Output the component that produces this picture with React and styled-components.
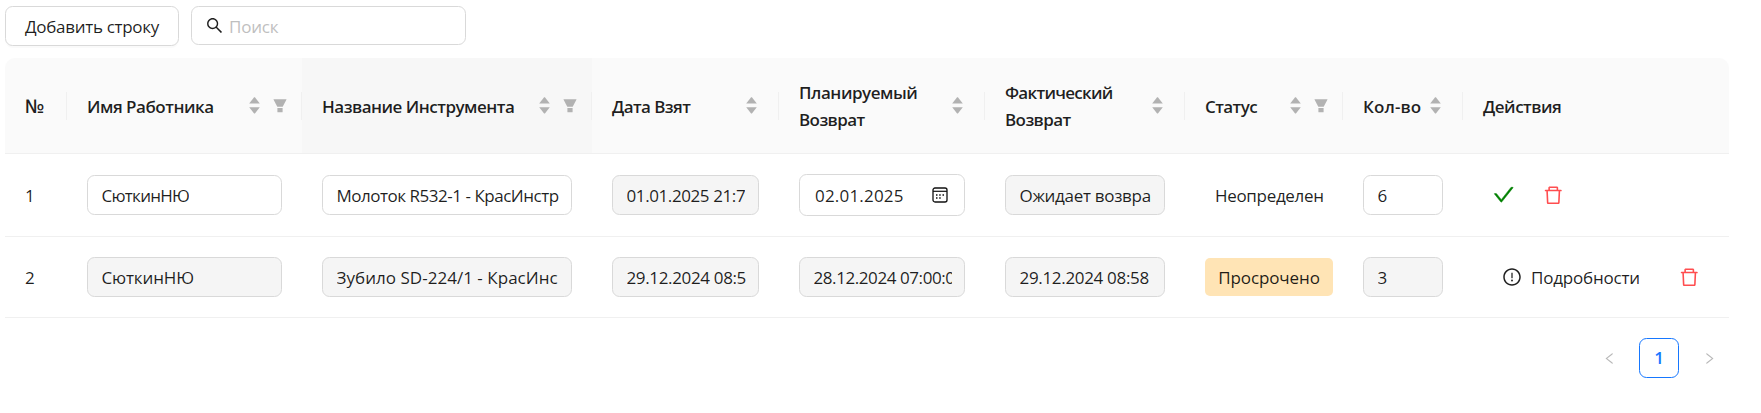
import React from 'react';
import styled, { createGlobalStyle, css } from 'styled-components';
import {
  AiOutlineCheck,
  AiOutlineDelete,
  AiOutlineExclamationCircle,
  AiOutlineLeft,
  AiOutlineRight,
  AiOutlineSearch,
} from 'react-icons/ai';

const GlobalStyle = createGlobalStyle`
  *, *::before, *::after { box-sizing: border-box; }
  body {
    margin: 0;
    background: #fff;
    color: rgba(0, 0, 0, 0.88);
    font-family: 'Open Sans', 'Noto Sans', sans-serif;
    font-size: 17px;
    line-height: 27.5px;
  }
`;

const Page = styled.main`
  width: 1729px;
  padding: 6px 0 0 5px;
`;

const Toolbar = styled.div`
  display: flex;
  align-items: flex-start;
  gap: 12px;
  height: 52px;
`;

const AddButton = styled.button`
  width: 174px;
  height: 40px;
  padding: 1px 0 0;
  border: 1px solid #d9d9d9;
  border-radius: 7.5px;
  background: #fff;
  box-shadow: 0 2px 0 rgba(0, 0, 0, 0.02);
  color: inherit;
  font: inherit;
  letter-spacing: -0.3px;
`;

const SearchBox = styled.div`
  display: flex;
  align-items: center;
  gap: 5px;
  width: 275px;
  height: 39px;
  padding: 0 14px 0 13px;
  border: 1px solid #d9d9d9;
  border-radius: 7.5px;

  svg { margin-top: -1px; }
`;

const Placeholder = styled.span`
  padding-top: 2px;
  color: #bfbfbf;
  letter-spacing: -0.2px;
`;

const Table = styled.div`
  width: 100%;
`;

const columnTracks = css`
  display: grid;
  grid-template-columns: 62px 235px 290px 187px 206px 200px 158px 120px 1fr;
`;

const HeadRow = styled.div`
  ${columnTracks}
  height: 96px;
  border-bottom: 1px solid #f0f0f0;
  border-radius: 10px 10px 0 0;
  background: #fafafa;
  overflow: hidden;
`;

const HeadCell = styled.div`
  display: flex;
  align-items: center;
  padding-left: 20px;
  background: ${(p) => (p.$hovered ? '#f7f7f7' : 'transparent')};
  font-weight: 600;
`;

const HeadTitle = styled.span`
  flex: 1;
  padding-top: ${(p) => (p.$double ? 0 : 2)}px;
  line-height: 27px;
`;

const TitleLine = styled.span`
  display: block;
  white-space: nowrap;
  font-size: ${(p) => p.$size || 17}px;
  letter-spacing: ${(p) => p.$track || 0}px;
`;

const HeadIcons = styled.span`
  display: flex;
  align-items: center;
  gap: 13px;
  margin-right: ${(p) => (p.$filter ? 14.5 : 21)}px;
`;

const Divider = styled.span`
  width: 1px;
  height: 28px;
  background: #f0f0f0;
`;

const Row = styled.div`
  ${columnTracks}
  height: ${(p) => p.$height}px;
  border-bottom: 1px solid #f0f0f0;
`;

const Cell = styled.div`
  display: flex;
  align-items: center;
  padding: 0 20px;
`;

const RowNumber = styled.span`
  padding-top: 1px;
`;

const Field = styled.div`
  display: flex;
  align-items: center;
  width: 100%;
  height: 40px;
  padding: 0 12.5px 0 13.5px;
  border: 1px solid #d9d9d9;
  border-radius: 7.5px;
  background: ${(p) => (p.$disabled ? '#f5f5f5' : '#fff')};
`;

const DateField = styled(Field)`
  justify-content: space-between;
  height: 42px;
  padding: 0 16.5px 0 15px;
`;

const FieldText = styled.span`
  min-width: 0;
  padding-top: 1px;
  overflow: hidden;
  white-space: nowrap;
  letter-spacing: ${(p) => p.$track || 0}px;
`;

const Status = styled.span`
  flex: none;
  padding: 6px 10px 5px;
  letter-spacing: -0.32px;
  white-space: nowrap;
`;

const LateStatus = styled(Status)`
  width: 128px;
  padding: 6px 0 4.5px;
  border-radius: 5px;
  background: #ffe4b5;
  letter-spacing: -0.1px;
  text-align: center;
`;

const Actions = styled.div`
  display: flex;
  align-items: center;
  gap: ${(p) => p.$gap}px;
  padding-left: ${(p) => p.$inset}px;
`;

const IconButton = styled.button`
  display: flex;
  padding: 0;
  border: 0;
  background: none;
  color: ${(p) => p.$color};

  svg { stroke-width: ${(p) => p.$stroke || 0}px; }
`;

const DetailsButton = styled.button`
  display: flex;
  align-items: center;
  gap: 9px;
  padding: 1px 0 0;
  border: 0;
  background: none;
  color: inherit;
  font: inherit;
  letter-spacing: -0.2px;

  svg { margin-top: -2px; }
`;

const Pagination = styled.nav`
  display: flex;
  justify-content: flex-end;
  gap: 10px;
  margin-top: 20px;
`;

const PageItem = styled.span`
  display: flex;
  align-items: center;
  justify-content: center;
  width: 40px;
  height: 40px;
  border: 1px solid ${(p) => (p.$active ? '#1677ff' : 'transparent')};
  border-radius: 7.5px;
  color: ${(p) => (p.$active ? '#1677ff' : 'rgba(0, 0, 0, 0.28)')};
  font-weight: 600;
`;

const SorterIcon = () => (
  <svg width="11" height="17" viewBox="0 0 11 17" fill="#b2b2b2">
    <path d="M5.1.3 5.9.3 10.8 6.6H.2z" />
    <path d="M.2 10.2h10.6L5.9 16.6H5.1z" />
  </svg>
);

const FilterIcon = () => (
  <svg width="14" height="14" viewBox="0 0 14 14" fill="#b2b2b2">
    <path d="M.9.2h12.2q.6 0 .3.6L9.7 7.8H4.3L.6.8Q.3.2.9.2z" />
    <path d="M4.4 9h5.2v3.7q0 .5-.5.5H4.9q-.5 0-.5-.5z" />
  </svg>
);

const CalendarIcon = () => (
  <svg width="16" height="16" viewBox="0 0 16 16" fill="none" stroke="#111">
    <rect x="1" y="1" width="14" height="14" rx="2" strokeWidth="1.3" />
    <path d="M1 4.3h14" strokeWidth="1.2" />
    <path d="M4 8h1.5M7.2 8h1.5M10.5 8H12M4 11h1.5M7.2 11h1.5" strokeWidth="1.5" />
  </svg>
);

const columns = [
  { lines: [['№', 0, 19]] },
  { lines: [['Имя Работника', -0.48]], sorter: true, filter: true },
  { lines: [['Название Инструмента', -0.5]], sorter: true, filter: true, hovered: true },
  { lines: [['Дата Взят', -0.6]], sorter: true },
  { lines: [['Планируемый', -0.46], ['Возврат', -0.6]], sorter: true },
  { lines: [['Фактический', -0.72], ['Возврат', -0.6]], sorter: true },
  { lines: [['Статус', -0.58]], sorter: true, filter: true },
  { lines: [['Кол-во', 0.1]], sorter: true },
  { lines: [['Действия', -0.5]], last: true },
];

const TextField = ({ track, disabled, children }) => (
  <Cell>
    <Field $disabled={disabled}>
      <FieldText $track={track}>{children}</FieldText>
    </Field>
  </Cell>
);

export default function App() {
  return (
    <Page>
      <GlobalStyle />
      <Toolbar>
        <AddButton>Добавить строку</AddButton>
        <SearchBox>
          <AiOutlineSearch size={19} />
          <Placeholder>Поиск</Placeholder>
        </SearchBox>
      </Toolbar>

      <Table>
        <HeadRow>
          {columns.map((column, index) => (
            <HeadCell key={index} $hovered={column.hovered}>
              <HeadTitle $double={column.lines.length > 1}>
                {column.lines.map(([text, track, size]) => (
                  <TitleLine key={text} $track={track} $size={size}>{text}</TitleLine>
                ))}
              </HeadTitle>
              {column.sorter && (
                <HeadIcons $filter={column.filter}>
                  <SorterIcon />
                  {column.filter && <FilterIcon />}
                </HeadIcons>
              )}
              {!column.last && <Divider />}
            </HeadCell>
          ))}
        </HeadRow>

        <Row $height={83}>
          <Cell><RowNumber>1</RowNumber></Cell>
          <TextField track={-0.74}>СюткинНЮ</TextField>
          <TextField track={-0.48}>Молоток R532-1 - КрасИнстр</TextField>
          <TextField track={-0.4} disabled>01.01.2025 21:7</TextField>
          <Cell>
            <DateField>
              <FieldText $track={0.2}>02.01.2025</FieldText>
              <CalendarIcon />
            </DateField>
          </Cell>
          <TextField track={-0.3} disabled>Ожидает возвра</TextField>
          <Cell><Status>Неопределен</Status></Cell>
          <TextField>6</TextField>
          <Cell>
            <Actions $gap={26} $inset={9}>
              <IconButton $color="#008000" $stroke={22}><AiOutlineCheck size={23.5} /></IconButton>
              <IconButton $color="#ff4d4f"><AiOutlineDelete size={22.5} /></IconButton>
            </Actions>
          </Cell>
        </Row>

        <Row $height={81}>
          <Cell><RowNumber>2</RowNumber></Cell>
          <TextField track={-0.15} disabled>СюткинНЮ</TextField>
          <TextField track={0.03} disabled>Зубило SD-224/1 - КрасИнс</TextField>
          <TextField track={-0.35} disabled>29.12.2024 08:5</TextField>
          <TextField track={-0.42} disabled>28.12.2024 07:00:0</TextField>
          <TextField track={-0.32} disabled>29.12.2024 08:58</TextField>
          <Cell><LateStatus>Просрочено</LateStatus></Cell>
          <TextField disabled>3</TextField>
          <Cell>
            <Actions $gap={38} $inset={19}>
              <DetailsButton>
                <AiOutlineExclamationCircle size={20} />
                Подробности
              </DetailsButton>
              <IconButton $color="#ff4d4f"><AiOutlineDelete size={22.5} /></IconButton>
            </Actions>
          </Cell>
        </Row>
      </Table>

      <Pagination>
        <PageItem><AiOutlineLeft size={15} /></PageItem>
        <PageItem $active>1</PageItem>
        <PageItem><AiOutlineRight size={15} /></PageItem>
      </Pagination>
    </Page>
  );
}
